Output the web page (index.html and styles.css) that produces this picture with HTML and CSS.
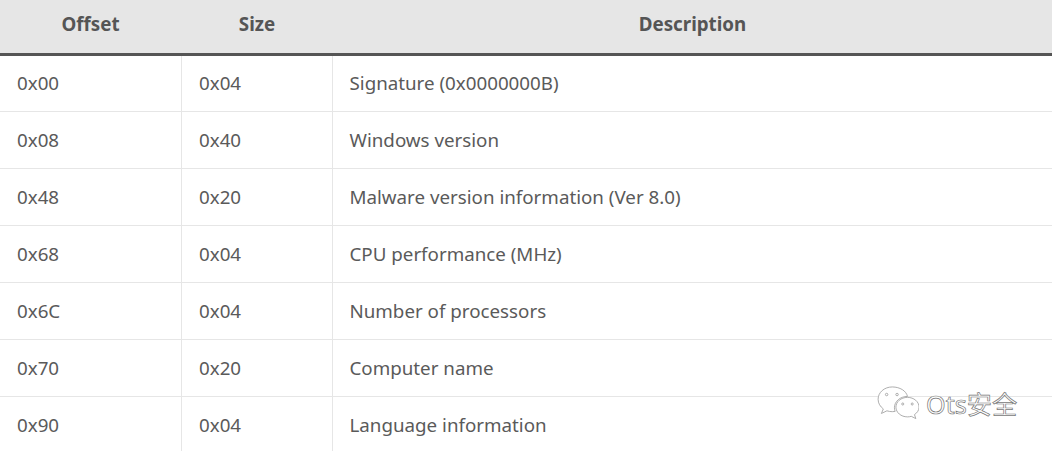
FILE: index.html
```
<!DOCTYPE html>
<html lang="en">
<head>
<meta charset="utf-8">
<title>Structure</title>
<link rel="stylesheet" href="styles.css">
</head>
<body>
<table class="data">
<colgroup><col class="c1"><col class="c2"><col class="c3"></colgroup>
<thead>
<tr><th>Offset</th><th>Size</th><th>Description</th></tr>
</thead>
<tbody>
<tr><td>0x00</td><td>0x04</td><td>Signature (0x0000000B)</td></tr>
<tr><td>0x08</td><td>0x40</td><td>Windows version</td></tr>
<tr><td>0x48</td><td>0x20</td><td>Malware version information (Ver 8.0)</td></tr>
<tr><td>0x68</td><td>0x04</td><td>CPU performance (MHz)</td></tr>
<tr><td>0x6C</td><td>0x04</td><td>Number of processors</td></tr>
<tr><td>0x70</td><td>0x20</td><td>Computer name</td></tr>
<tr><td>0x90</td><td>0x04</td><td>Language information</td></tr>
</tbody>
</table>
<div class="mark">
<svg class="mark-icon" width="42" height="36" viewBox="0 0 44 38" fill="#fff" stroke="#a0a0a0" stroke-width="0.9">
<path d="M16 1C7.500 1 1 6.800 1 14c0 4.300 2.300 7.800 5.500 10.200L4.500 29l5.800-2.800c1.900.6 3.800.9 5.700.9 1 0 2-.1 3-.3-.5-1.200-.8-2.500-.8-3.800 0-6.800 6.200-12 13.800-12-1.300-5.900-8-10-16-10z"/>
<path d="M32 12c-6.800 0-12.200 4.600-12.200 10.300S25.200 32.600 32 32.600c1.400 0 2.800-.2 4-.6l4.800 2.400-1.400-4.200c2.900-1.900 4.800-4.700 4.800-7.900C44.200 16.600 38.800 12 32 12z"/>
<circle cx="10" cy="9" r="1.300"/><circle cx="21" cy="9" r="1.300"/><circle cx="27" cy="19" r="1.100"/><circle cx="37" cy="19" r="1.100"/>
</svg>
<span class="mark-text">Ots安全</span>
</div>
</body>
</html>
```
FILE: styles.css
```
html, body {
  margin: 0;
  padding: 0;
  background: #fff;
  overflow: hidden;
}
body {
  position: relative;
  height: 451px;
  font-family: "Noto Sans", "Noto Sans CJK SC", sans-serif;
  color: #555;
}
.data {
  width: 1052px;
  border-collapse: collapse;
  table-layout: fixed;
  font-size: 18.75px;
  line-height: 24px;
}
.c1 { width: 181px; }
.c2 { width: 151px; }
.data th {
  height: 54px;
  padding: 0 17px 5px;
  box-sizing: border-box;
  background: #e6e6e6;
  border-bottom: 3px solid #555;
  font-weight: 700;
  text-align: center;
  vertical-align: middle;
}
.data th + th { padding-left: 18px; }
.data td {
  height: 57px;
  padding: 0 17px;
  box-sizing: border-box;
  color: #5a5a5a;
  border-bottom: 1px solid #e6e6e6;
  border-left: 1px solid #e6e6e6;
  vertical-align: middle;
}
.data td + td { padding-left: 17.5px; }
.data td:last-child { padding-left: 17px; }
.data td:first-child { border-left: 0; }
.mark {
  position: absolute;
  left: 877px;
  top: 386px;
  display: flex;
  align-items: center;
  gap: 7px;
}
.mark-text {
  font-size: 25.2px;
  line-height: 36px;
  color: #fff;
  -webkit-text-stroke: 0.7px #777;
}
```
